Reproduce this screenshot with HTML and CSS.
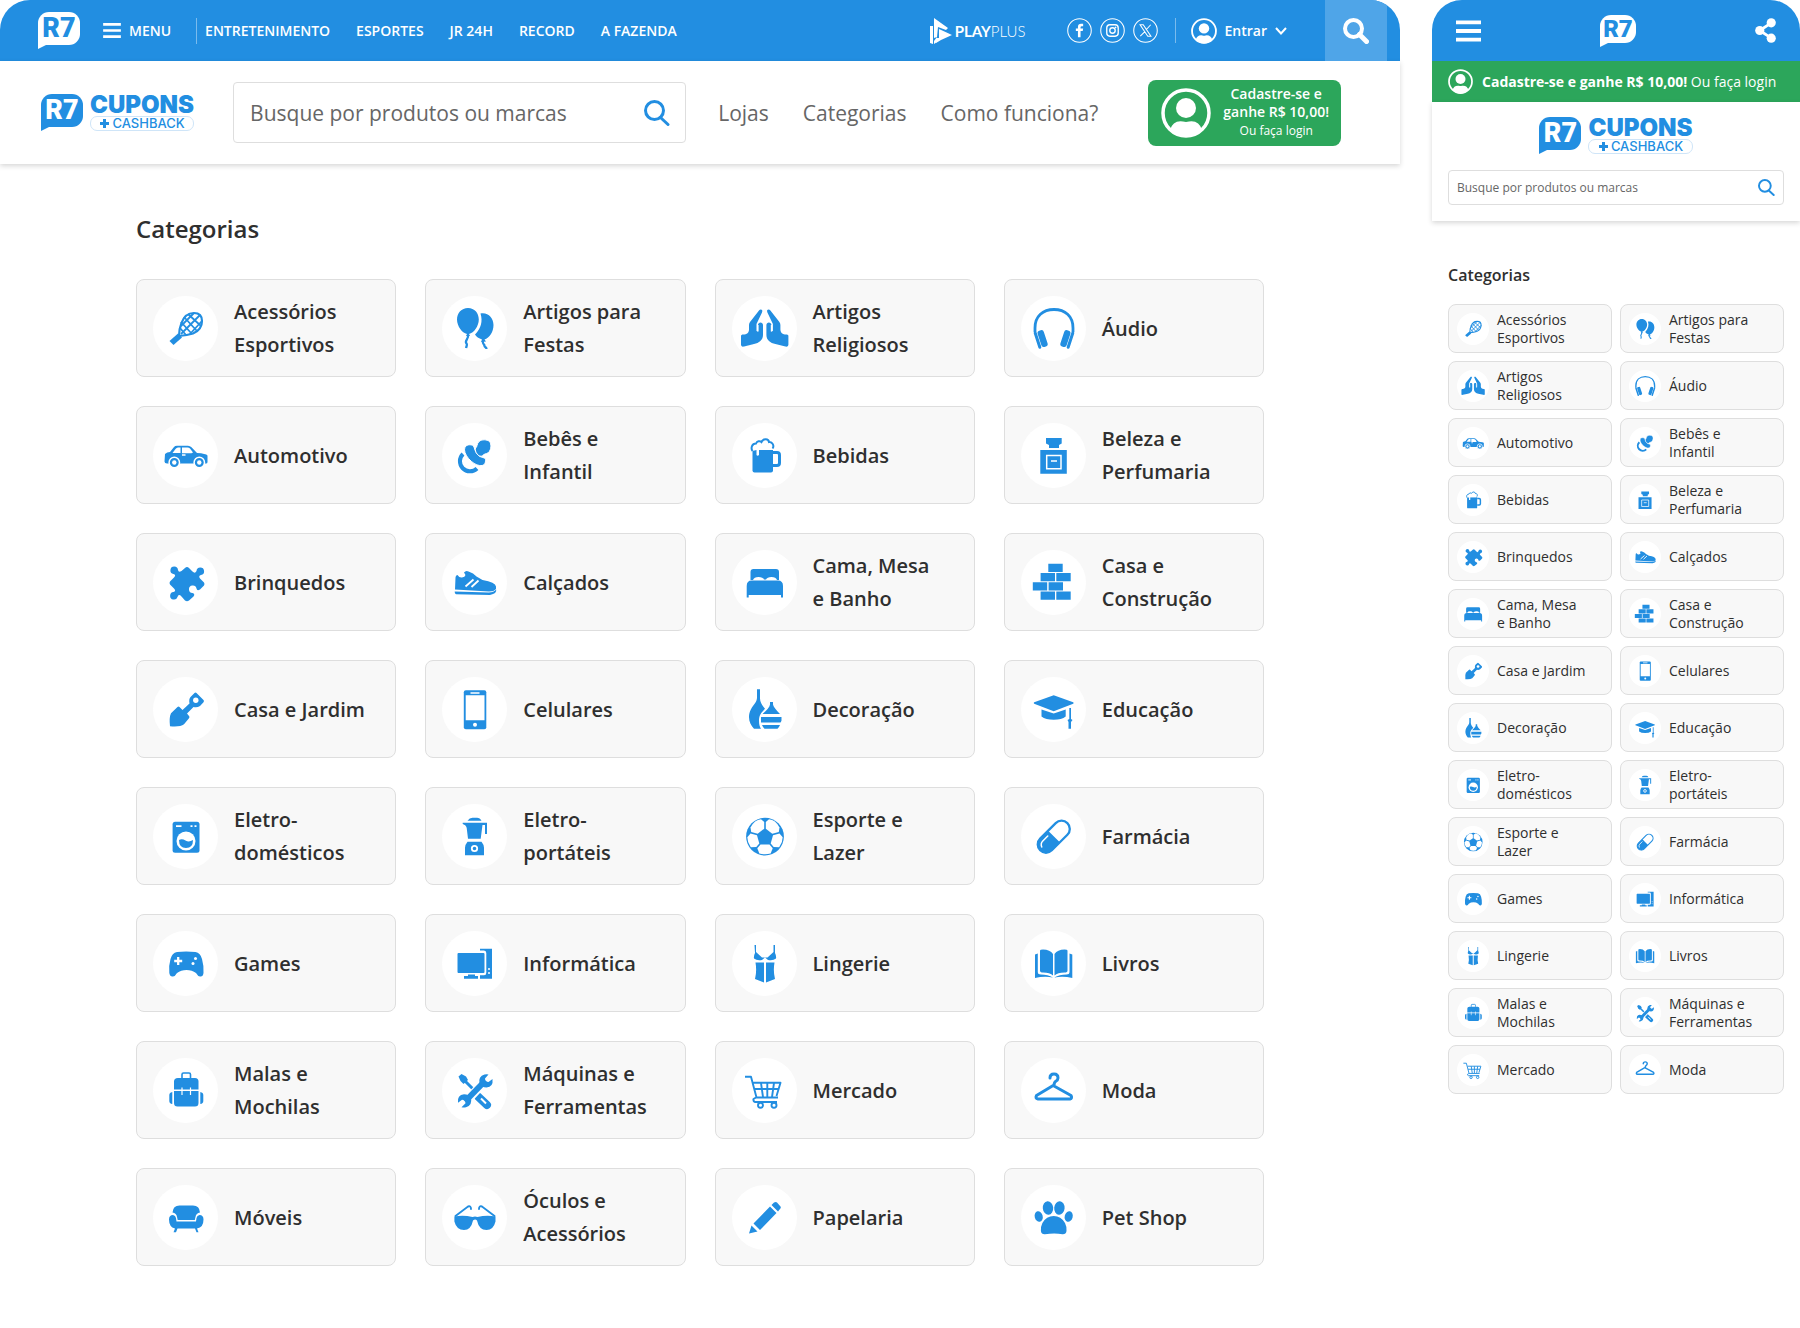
FILE: index.html
```
<!DOCTYPE html>
<html lang="pt-BR">
  <head>
    <meta charset="UTF-8" />
    <meta name="viewport" content="width=device-width, initial-scale=1.0" />
    <title>R7 Cupons - Categorias</title>
    <link rel="stylesheet" href="styles.css">
  </head>
  <body>
    <svg class="sprite" aria-hidden="true">
      <symbol id="playplus" viewBox="0 0 22 26">
        <path d="M0 8h3v18l-3-1zM4 0l14 10-2 2-8-3-1 10-3 1z" />
        <path d="M9 11l13 6-11 5-5 3 1-5h2z" />
        <path d="M4 23l3-4v5l-3 2z" />
      </symbol>

      <!-- interface -->
      <symbol id="bars" viewBox="0 0 26 22">
        <path d="M0 0h26v4H0zM0 9h26v4H0zM0 18h26v4H0z" />
      </symbol>
      <symbol id="search" viewBox="0 0 26 26">
        <g fill="none" stroke="currentColor" stroke-width="3"><circle cx="10.500" cy="10.500" r="9" /><path d="M16.500 17.500l7.500 7" stroke-linecap="round" /></g>
      </symbol>
      <symbol id="search-bold" viewBox="0 0 26 26">
        <g fill="none" stroke="currentColor" stroke-width="4"><circle cx="10.500" cy="10.500" r="8.500" /><path d="M16.500 16.500l7 7" stroke-width="5" stroke-linecap="round" /></g>
      </symbol>
      <symbol id="user" viewBox="0 0 50 50">
        <circle cx="25" cy="25" r="23" fill="none" stroke="currentColor" stroke-width="3.500" />
        <circle cx="25" cy="20" r="10" />
        <path d="M9 42q3-10 13-8.500 3 .8 6 0 10-1.500 13 8.500-7 7-16 7T9 42z" />
      </symbol>
      <symbol id="chevron" viewBox="0 0 12 8">
        <path d="M1 1l5 5.500L11 1" fill="none" stroke="currentColor" stroke-width="2" />
      </symbol>
      <symbol id="share" viewBox="0 0 22 26">
        <path d="M17 5L5 13l12 8" fill="none" stroke="currentColor" stroke-width="3" />
        <circle cx="17" cy="5" r="4.800" /><circle cx="5" cy="13" r="4.800" /><circle cx="17" cy="21" r="4.800" />
      </symbol>
      <symbol id="facebook" viewBox="0 0 24 24">
        <circle cx="12" cy="12" r="11.300" fill="none" stroke="currentColor" />
        <path d="M10.500 18.500v-6H8.500V10h2V8.500q0-3 3-3h2V8h-1.300q-1.200 0-1.200 1.200V10h2.500l-.4 2.500H13v6z" />
      </symbol>
      <symbol id="instagram" viewBox="0 0 24 24">
        <g fill="none" stroke="currentColor"><circle cx="12" cy="12" r="11.300" /><rect x="6.500" y="6.500" width="11" height="11" rx="3" stroke-width="1.300" /><circle cx="12" cy="12" r="2.600" stroke-width="1.300" /></g>
        <circle cx="15" cy="9" r=".8" />
      </symbol>
      <symbol id="x" viewBox="0 0 24 24">
        <g fill="none" stroke="currentColor"><circle cx="12" cy="12" r="11.300" /><path d="M6.800 6.500h3l7.400 11h-3zM17 6.500l-4.600 5M11.400 13L7 17.500" /></g>
      </symbol>

      <!-- categories -->
      <symbol id="racket" viewBox="0 0 65 65">
        <g fill="none" stroke="currentColor" stroke-width="1.800">
          <path d="M26 40c0-4 .5-8 2.500-13C31 20 35 17 41 17c5 0 8 3 8 8 0 6-3 10-9 12.500-5 1.500-9 2-14 2.500z" stroke-width="2.200" />
          <path d="M31 21l13 14M28 26l11 12M27 32l6 7M35 18l13 12M47 19L28 38M41 17L28 30M49 25L37 38" />
        </g>
        <path d="M25 37.500l4 4-8.500 7.500-4-4z" />
      </symbol>
      <symbol id="balloons" viewBox="0 0 65 65">
        <path d="M26 12c6.500 0 10.800 5 10.800 11.500C36.800 30 32 37 27 38l1 2h-4l1-2c-5-1-10-8-10-14.500C15 17 19.500 12 26 12z" />
        <path d="M38.500 17.500C46 16 51.500 22 51.500 29c0 7-4 13-9 14.500l1.500 2-5 .5 1-2.500c-3-1-6-3-7-5 6-6 8-13 5.500-21z" />
        <path d="M26 39c1 4-4 6-1.500 8.500 1 1 0 3-.5 4.500M41 45c-1 4 2 3 1.500 5 0 1 2 1 2 3" fill="none" stroke="currentColor" stroke-width="2.300" />
      </symbol>
      <symbol id="hands" viewBox="0 0 65 65">
        <g id="hand">
          <path d="M27 14.500c1-1.500 4.500-1.500 3 2L24.500 28v7l1.500.5V29c0-3.500 5-3.500 5 0v10c0 5-4 8-9 9l-10 2.500c-2 .5-3-.5-3-2V40c0-1 1-1.500 2-1.500 4 0 6-2 6-5V29q0-1.500 1-3z" />
          <path d="M26 29v6.500" fill="none" stroke="#fff" stroke-width="1.200" />
        </g>
        <use href="#hand" transform="translate(65.400 0) scale(-1 1)" />
      </symbol>
      <symbol id="headphones" viewBox="0 0 65 65">
        <path d="M14 36v-4C14 20 22 13.500 33 13.500S52 20 52 32v4" fill="none" stroke="currentColor" stroke-width="2.800" />
        <rect x="18.500" y="34" width="6.500" height="17" rx="2.500" transform="rotate(-18 22 43)" />
        <rect x="15" y="35" width="3" height="18" rx="1.500" transform="rotate(-18 17 44)" />
        <rect x="41" y="34" width="6.500" height="17" rx="2.500" transform="rotate(18 44 43)" />
        <rect x="48" y="35" width="3" height="18" rx="1.500" transform="rotate(18 49 44)" />
      </symbol>
      <symbol id="car" viewBox="0 0 65 65">
        <path d="M12 31q2-2 5-2l4-5q1-1.300 3-1.300h11q2 0 3.500 1.500L44 30q9 .5 10.500 2.500V39q0 1.500-1.500 1.500H14q-2.500 0-2.500-2z" />
        <path d="M27.500 24.500H25q-1.500 0-2.500 1.500l-3 4h8zM29 24.500h5.500q1.500 0 2.500 1l3 4-1.500.8H29z" fill="#fff" />
        <g stroke="#fff" stroke-width="1.500"><circle cx="21.300" cy="39.500" r="5.200" /><circle cx="46.300" cy="39.500" r="5.200" /></g>
        <circle cx="21.300" cy="39.500" r="2.200" fill="#fff" /><circle cx="46.300" cy="39.500" r="2.200" fill="#fff" />
        <path d="M29 32h3.500" stroke="#fff" stroke-width="1.300" />
      </symbol>
      <symbol id="pacifier" viewBox="0 0 65 65">
        <path d="M21 31a10 10 0 1 0 14 14.500" fill="none" stroke="currentColor" stroke-width="4" />
        <path d="M23 24c2-3 8-3 9 0 1 4 3 8 6 9.500s6 1 5.500 4c0 4-2 5.500-6 5C31 42 20 31 23 24z" stroke="#fff" stroke-width="1" />
        <path d="M33.500 25c2-1 1-4 3.500-6.500 3-2.500 8-2 10.500 0 2 2.500 2 8-1 11-2.500 2-5 1-6 3.500-4 1.500-8-4-7-8z" stroke="#fff" stroke-width="1" />
      </symbol>
      <symbol id="beer" viewBox="0 0 65 65">
        <path d="M20.500 27H41v20.500q0 2-2 2H22.500q-2 0-2-2z" />
        <path d="M41 29.500h4q2.500 0 2.500 2.500v8q0 2.500-2.500 2.500h-4" fill="none" stroke="currentColor" stroke-width="3" />
        <path d="M20.500 28c-2-3-.5-7.500 3.500-7.500 1-2.500 4-3 5.500-1.500 2-4 7-3.500 7.500 0 3.500-.5 5.500 4 3.500 6.500l-1.500 1.500H27v5q-1.500 1.500-2.500 0v-5z" fill="#fff" />
        <path d="M20.500 28c-2-3-.5-7.500 3.500-7.500 1-2.500 4-3 5.500-1.500 2-4 7-3.500 7.500 0 3.500-.5 5.500 4 3.500 6.500" fill="none" stroke="currentColor" stroke-width="2" />
      </symbol>
      <symbol id="perfume" viewBox="0 0 65 65">
        <path d="M25 15h15.700v5.500L38 22v3H28v-3l-3-1.500zM19.300 27h26.500v23.700H19.300z" />
        <path d="M25.700 32.500H40v13.200H25.700z" fill="none" stroke="#fff" stroke-width="1.500" />
        <path d="M30 38h6" stroke="#fff" stroke-width="1.500" />
      </symbol>
      <symbol id="puzzle" viewBox="0 0 65 65">
        <path d="M32 18q2-2 4 0l3.500 3.500q2.500 2.500 4-.5a3.800 3.800 0 1 1 4.500 4q-3 1-1 3.500l4 4q1 1.500 0 3l-4 4q-3 2-3.500-1a3.800 3.800 0 1 0-4 4.500q3 1 1 3.500l-4.500 4q-2 1.500-4 0l-3.500-4q-3-3-4 .5a3.800 3.800 0 1 1-4-5q3-1 .5-3.500l-4-4q-1-1.500 0-3l4-4q2.500-2.500-.5-3.500a3.800 3.800 0 1 1 4.500-4q.5 3 3.500 1z" />
      </symbol>
      <symbol id="shoe" viewBox="0 0 65 65">
        <path d="M13.500 27.500q0-2.500 2-2.500 2 3 4.500 2.500 3-.5 3.500-2.500l-1.500-2.500q2-2.500 4.500-1l4.500 2 3.500 3 6 3.500q13 2 13.500 6.500v2.500q-2 2.500-7 2.500L13 39.500z" />
        <path d="M12.700 41.500l34 1q5 0 7.500-3 .8 4-6.200 5.500l-34-.8q-1.500-.5-1.300-2.700z" />
        <path d="M23.500 36.500l8-7M29.500 37l7-6.500" stroke="#fff" stroke-width="1.800" />
      </symbol>
      <symbol id="bed" viewBox="0 0 65 65">
        <path d="M18.500 30v-8q0-3 3-3h22.500q3 0 3 3v8h-2q-1-3-5.500-3T34 29.500h-2Q31 27 26.500 27T21 30z" />
        <path d="M14.700 47.500V36q0-5.500 5-5.500H46q5 0 5 5.500v11.500h-2V45H16.700v2.500z" />
      </symbol>
      <symbol id="bricks" viewBox="0 0 65 65">
        <path d="M27.300 13.700h14.400V22H27.300zM19.600 23H34v8.300H19.600zM35.300 23h14.400v8.300H35.300zM11.800 32.300h14.400v8.300H11.800zM27.600 32.300H42v8.300H27.600zM19.600 41.500H34v8.300H19.600zM35.300 41.500h14.400v8.300H35.300z" />
      </symbol>
      <symbol id="trowel" viewBox="0 0 65 65">
        <path d="M24.500 30q1-.8 2 0l3 3 7-6.500q-1-5 1.500-7l3.500-3.500q1-.8 2 0l7 7q1 1 0 2.200l-3.500 3.800q-3 2-6.500 1L34 36.500l2 2.500q1 1 0 2.200l-5 6q-4 3-14 2-1-9 1-13z" />
        <circle cx="42.800" cy="23.300" r="2.700" fill="#fff" />
      </symbol>
      <symbol id="phone" viewBox="0 0 65 65">
        <rect x="21.800" y="13.300" width="22.500" height="39" rx="2" />
        <path d="M23.700 18.300h18.800v25H23.700zM28.500 15.300h9v1.500h-9z" fill="#fff" />
        <circle cx="33" cy="47.800" r="2" fill="#fff" />
      </symbol>
      <symbol id="vases" viewBox="0 0 65 65">
        <path d="M25 12.300h3v9c0 4 2 7 5 10.500-3 4-6 5-6 12 0 4 .8 6 2 8h-7c-3-3-5-7-5-11.500 0-6 3-10 6-14 1.500-2 2-4 2-6z" />
        <path d="M38 25h3v2.500q.5 3 7 9.500H30.500q7-6 7.500-9.500zM29 40h20.500v3.500q-.5 1.500-1 2H29zM30 48h18q-1 2.500-2.500 3.800h-13Q31 50.500 30 48z" />
      </symbol>
      <symbol id="cap" viewBox="0 0 65 65">
        <path d="M32.700 18.300l19.500 6.900q1 .8 0 1.600l-19.500 7.500-19.500-7.500q-1-.8 0-1.600z" />
        <path d="M20.500 32.500l12.200 4 12-4v7q-4 3.200-12 3.200t-12.200-3.200z" />
        <path d="M48.300 31h1.700v11l1.500 1-1.500 2v6.700h-2.500V45L46.500 43l1.800-1z" />
      </symbol>
      <symbol id="washer" viewBox="0 0 65 65">
        <rect x="19.600" y="17.700" width="26.900" height="31" rx="2.500" />
        <circle cx="33" cy="37" r="9.500" fill="#fff" />
        <path d="M26 36q3-1.500 6.500.5T40 36q0 8-7 8t-7-8z" />
        <path d="M23 22.200h5.500M37.500 22.200h2M41.500 22.200h2" stroke="#fff" stroke-width="1.800" />
      </symbol>
      <symbol id="blender" viewBox="0 0 65 65">
        <path d="M25.500 16.700q2-3 5-3H35q3 0 4.500 3zM20.700 18.700H45V30h-2V21h-2.500l-1.800 13.700H26L24.700 24q-.5-3-4-4zM25.500 37.700h14q2.500 3 2.500 6v7.600H23v-7.600q0-3 2.500-6z" />
        <circle cx="32.500" cy="44.500" r="2.700" fill="none" stroke="#fff" stroke-width="1.800" />
      </symbol>
      <symbol id="ball" viewBox="0 0 65 65">
        <circle cx="33" cy="32.600" r="18.900" />
        <g fill="#fff">
          <path d="M32.200 18v6.700l-6.500 5-6.500-1.700-.7-4.500Q22.500 15.500 29 15.200z" />
          <path d="M33.800 18v6.700l6.500 5 6.500-1.700.7-4.500Q43.500 15.500 37 15.200z" />
          <path d="M18.500 29.500l6.500 1.800 2.300 8.200-3 3.500-5.500.3q-3.500-5-3.500-10z" />
          <path d="M47.500 29.500L41 31.300l-2.300 8.200 3 3.500 5.500.3q3.500-5 3.500-10z" />
          <path d="M28.500 40.500h9l3.200 3.800-2 5.200q-5.700 1.500-11.400 0l-2-5.200z" />
        </g>
      </symbol>
      <symbol id="pill" viewBox="0 0 65 65">
        <g transform="rotate(-45 32.700 32.700)">
          <rect x="13.500" y="24.500" width="38.500" height="16.500" rx="8.250" fill="none" stroke="currentColor" stroke-width="2.300" />
          <path d="M33 24.500V41H22a8 8 0 0 1 0-16.500z" />
          <path d="M17 31.500q1.500-3.500 5-3.500h7" fill="none" stroke="#fff" stroke-width="1.500" stroke-linecap="round" />
        </g>
      </symbol>
      <symbol id="gamepad" viewBox="0 0 65 65">
        <path d="M24 21q9-1 18.500 0 5 1 6.500 7 2 7 1.500 14-.5 4-3.500 3.500-2 0-4-3.500-4-3-9.500-3T24 42q-2 3.500-4 3.500-3 .5-3.700-3.500Q15.500 35 17.500 28q1.500-6 6.500-7z" />
        <path d="M25.200 26v8M21.200 30h8" stroke="#fff" stroke-width="2.300" />
        <circle cx="42.500" cy="27.500" r="1.500" fill="#fff" /><circle cx="40" cy="32.500" r="1.500" fill="#fff" />
      </symbol>
      <symbol id="computer" viewBox="0 0 65 65">
        <path d="M16.500 22h25q1 0 1 1v18q0 1-1 1h-25q-1 0-1-1V23q0-1 1-1zM26 43.500h7v1.500h3v2.700H22V45h4zM38 17.700h12v30H38v-3.500h4q2.300 0 2.300-2.500V22q0-2.500-2.300-2.500h-4z" />
        <circle cx="47" cy="38" r="1" fill="#fff" /><circle cx="47" cy="42" r="1" fill="#fff" />
      </symbol>
      <symbol id="lingerie" viewBox="0 0 65 65">
        <path d="M22.500 14H24v7l6 5.500h5.500l6-5.500v-7H43v8q1.500 3 1 5.500-3 2.500-8 1.500l-3-2.500-3 2.500q-5 1-8-1.500-.5-2.500 1-5.500z" />
        <path d="M23.500 31.500h8.500v20l-9-3.500q2-8 .5-16.500zM42.500 31.500H34v20l9-3.500q-2-8-.5-16.500z" />
      </symbol>
      <symbol id="book" viewBox="0 0 65 65">
        <path d="M32 23q-3-4.500-10-4.500-3 0-3 1v20q0 2 3 2 7 0 10 3zM33.500 23q3-4.500 10-4.500 3 0 3 1v20q0 2-3 2-7 0-10 3z" />
        <path d="M14 23.500l2.800-1V41q0 2.500 3 2.500 7 0 12.200 3Q23 45 14 47zM51.300 23.500l-2.800-1V41q0 2.500-3 2.500-7 0-12.200 3Q42.300 45 51.300 47z" />
      </symbol>
      <symbol id="backpack" viewBox="0 0 65 65">
        <path d="M29 20v-3.500q0-1.500 1.500-1.500H36q1.500 0 1.500 1.500V20" fill="none" stroke="currentColor" stroke-width="1.600" />
        <path d="M25 20h17q3.500 0 3.500 3.500v8h-24.500v-8q0-3.500 4-3.500zM21 33h24.500v12q0 3.500-3.500 3.500H24.500q-3.500 0-3.500-3.500zM19.300 34v12q-3-.5-3-3v-6q0-2.500 3-3zM47.300 34v12q3-.5 3-3v-6q0-2.500-3-3z" />
        <path d="M29 29.500V37M37.500 29.500V37" stroke="#fff" stroke-width="1.200" />
      </symbol>
      <symbol id="tools" viewBox="0 0 65 65">
        <path d="M19 19l13 13" stroke="currentColor" stroke-width="3" />
        <path d="M16.500 18.500l3-2.500 4.500 2.500 2 3.500-4.500 4-3-3z" />
        <path d="M36 38.500l9 8.500" stroke="currentColor" stroke-width="8" stroke-linecap="round" />
        <path d="M39 40.500l5 5" stroke="#fff" stroke-width="2" />
        <path d="M24 43.500L44 22" stroke="#fff" stroke-width="9" />
        <path d="M23 43.500L43.500 22.500" stroke="currentColor" stroke-width="6" />
        <path d="M46.500 16.500l-3.500 4 .5 3 3 .5 4-3q1 8-6 8.500-5 0-7-4-1.500-7 5-9 2-.5 4 0zM19.500 49.300l4-4-.5-3-3-.5-4 3q-1-8 6-8.500 5 0 7 4 1.500 7-5 9-2 .5-4.500 0z" />
      </symbol>
      <symbol id="cart" viewBox="0 0 65 65">
        <g fill="none" stroke="currentColor" stroke-width="1.900" stroke-linejoin="round">
          <path d="M13 18.700h6l5.500 20.800H46M21.500 24.800h27L44.500 38M22.500 31h24M45 44H23q-2-.5-1.500-3l2.500-1.500M29 25l2 14M35.300 25v14M42 25l-2 14" />
          <circle cx="28.500" cy="47.300" r="2.500" /><circle cx="42" cy="47.300" r="2.500" />
        </g>
      </symbol>
      <symbol id="hanger" viewBox="0 0 65 65">
        <path d="M29 20q0-4 4-4t4 4q0 2-2.500 3.500Q33 24.500 33 28L50 37.500q1.500 3-1 3.500H17q-3-.5-1.500-3.500L33 27" fill="none" stroke="currentColor" stroke-width="3" stroke-linecap="round" stroke-linejoin="round" />
      </symbol>
      <symbol id="armchair" viewBox="0 0 65 65">
        <path d="M19.500 27.500q.5-7 7-7h13.500q6.500 0 7 7-4 .5-4.500 4.500l-.7 3H24.700L24 32q-.5-4-4.500-4.500z" />
        <path d="M20 30q2.500.5 3 3l.5 3.500h19.500l.5-3.500q.5-2.500 3-3 4 0 4 4.500 0 8-6.500 9l1.500 3.700h-2l-1.500-3.700h-17.500l-1.500 3.700h-2.500l1.500-3.700q-6-1.500-6-9 0-4.500 4-4.500z" />
      </symbol>
      <symbol id="glasses" viewBox="0 0 65 65">
        <path d="M12.400 31.500q9-1.500 18.100.5 2.500-.8 5 0 9-2 18-.5v5q-2 8.500-9 8.500-7.500 0-9.500-9.500-1.800-2-4 0-2 9.500-9 9.500-7.500 0-9.600-8.500z" />
        <path d="M13.500 31L26 21.500q3-1 3 2.500M52.500 31L40 21.500q-3-1-3 2.500" fill="none" stroke="currentColor" stroke-width="1.900" stroke-linecap="round" />
      </symbol>
      <symbol id="pencil" viewBox="0 0 65 65">
        <path d="M42 17.500q2-1 3 0l3.500 4q.8 1.500-.5 2.500L46 26.500 39.500 20zM38 21.500l6.500 6.500-16.500 17-6.500-6.500zM19.500 40.500l6 6-8.500 2z" />
      </symbol>
      <symbol id="paw" viewBox="0 0 65 65">
        <ellipse cx="27" cy="23" rx="5.200" ry="6.800" transform="rotate(-5 27 23)" />
        <ellipse cx="38.400" cy="23" rx="5.200" ry="6.800" transform="rotate(5 38.400 23)" />
        <ellipse cx="17.700" cy="31.500" rx="4" ry="5.300" transform="rotate(-14 17.700 31.500)" />
        <ellipse cx="47.700" cy="31.500" rx="4" ry="5.300" transform="rotate(14 47.700 31.500)" />
        <path d="M32.700 31Q40 31 44 38q2 4 1.500 8-.5 3.500-4 3.300-8-1.500-17.600 0-3.500.2-4-3.300-.5-4 1.500-8 4-7 11.300-7z" />
      </symbol>
    </svg>

    <!-- desktop -->
    <div class="desktop">
      <div class="topbar">
        <a href="#" class="r7">R7</a>
        <button class="menu-btn"><svg><use href="#bars" /></svg>MENU</button>
        <nav class="topbar-nav">
          <a href="#">ENTRETENIMENTO</a>
          <a href="#">ESPORTES</a>
          <a href="#">JR 24H</a>
          <a href="#">RECORD</a>
          <a href="#">A FAZENDA</a>
        </nav>
        <a href="#" class="playplus"><svg><use href="#playplus" /></svg><span><b>PLAY</b>PLUS</span></a>
        <div class="social">
          <a href="#" aria-label="Facebook"><svg><use href="#facebook" /></svg></a>
          <a href="#" aria-label="Instagram"><svg><use href="#instagram" /></svg></a>
          <a href="#" aria-label="X"><svg><use href="#x" /></svg></a>
        </div>
        <button class="login-btn">
          <svg class="login-user"><use href="#user" /></svg>Entrar<svg class="login-arrow"><use href="#chevron" /></svg>
        </button>
        <button class="topbar-search" aria-label="Buscar"><svg><use href="#search-bold" /></svg></button>
      </div>

      <header class="header">
        <a href="#" class="logo">
          <span class="r7">R7</span>
          <span class="logo-name">
            <span class="logo-cupons">CUPONS</span>
            <span class="logo-cashback"><svg><path d="M4 1h3v3h3v3H7v3H4V7H1V4h3z" /></svg>CASHBACK</span>
          </span>
        </a>
        <form class="search">
          <input type="search" placeholder="Busque por produtos ou marcas" aria-label="Busque por produtos ou marcas">
          <button type="button" aria-label="Buscar"><svg><use href="#search" /></svg></button>
        </form>
        <nav class="header-nav">
          <a href="#">Lojas</a>
          <a href="#">Categorias</a>
          <a href="#">Como funciona?</a>
        </nav>
        <a href="#" class="signup">
          <svg><use href="#user" /></svg>
          <span class="signup-text"><b>Cadastre-se e<br>ganhe R$ 10,00!</b><small>Ou faça login</small></span>
        </a>
      </header>

      <main class="content">
        <h1>Categorias</h1>
        <div class="grid" id="grid-desktop"></div>
      </main>
    </div>

    <!-- mobile -->
    <div class="mobile">
      <div class="topbar">
        <button class="mobile-menu" aria-label="Menu"><svg><use href="#bars" /></svg></button>
        <a href="#" class="r7">R7</a>
        <button class="mobile-share" aria-label="Compartilhar"><svg><use href="#share" /></svg></button>
      </div>
      <a href="#" class="signup-bar">
        <svg><use href="#user" /></svg>
        <span><b>Cadastre-se e ganhe R$ 10,00!</b> Ou faça login</span>
      </a>
      <header class="header">
        <a href="#" class="logo">
          <span class="r7">R7</span>
          <span class="logo-name">
            <span class="logo-cupons">CUPONS</span>
            <span class="logo-cashback"><svg><path d="M4 1h3v3h3v3H7v3H4V7H1V4h3z" /></svg>CASHBACK</span>
          </span>
        </a>
        <form class="search">
          <input type="search" placeholder="Busque por produtos ou marcas" aria-label="Busque por produtos ou marcas">
          <button type="button" aria-label="Buscar"><svg><use href="#search" /></svg></button>
        </form>
      </header>
      <main class="content">
        <h2>Categorias</h2>
        <div class="grid" id="grid-mobile"></div>
      </main>
    </div>

    <script src="script.js"></script>
  </body>
</html>
```

FILE: styles.css
```
* {
  box-sizing: border-box;
}

body {
  margin: 0;
  display: flex;
  gap: 32px;
  align-items: flex-start;
  background-color: #fff;
  color: #2f2f2f;
  font-family: "Open Sans", "Noto Sans", sans-serif;
}

a {
  color: inherit;
  text-decoration: none;
}

button {
  display: flex;
  align-items: center;
  padding: 0;
  border: none;
  background: none;
  color: inherit;
  font: inherit;
  cursor: pointer;
}

svg {
  display: block;
  flex-shrink: 0;
  fill: currentColor;
}

.sprite {
  position: absolute;
  width: 0;
  height: 0;
}

.desktop {
  flex: 1;
  min-width: 0;
}

.mobile {
  width: 368px;
}

/* top bar */

.topbar {
  display: flex;
  align-items: center;
  height: 61px;
  padding-left: 38px;
  border-radius: 30px 30px 0 0;
  background-color: #228ee1;
  color: #fff;
  font-size: 14px;
  font-weight: 600;
  overflow: hidden;
}

/* R7 speech bubble */
.r7 {
  position: relative;
  width: 42px;
  margin-bottom: 4px;
  border-radius: 11px 11px 11px 0;
  background-color: #fff;
  color: #228ee1;
  font-family: Roboto, sans-serif;
  font-size: 27px;
  font-weight: 900;
  line-height: 33px;
  text-align: center;
}

.r7::after {
  content: "";
  position: absolute;
  top: 100%;
  left: 0;
  border-top: 4px solid #fff;
  border-right: 8px solid transparent;
}

.logo .r7 {
  background-color: #228ee1;
  color: #fff;
}

.logo .r7::after {
  border-top-color: #228ee1;
}

.menu-btn {
  gap: 8px;
  margin-left: 23px;
}

.menu-btn svg {
  width: 18px;
  height: 15px;
}

.topbar-nav {
  display: flex;
  gap: 26px;
  margin-left: 25px;
  padding-left: 8px;
  border-left: 1px solid #7abbed;
  line-height: 26px;
}

.playplus {
  display: flex;
  align-items: center;
  gap: 3px;
  margin-left: auto;
  font-family: Lato, sans-serif;
  font-size: 15px;
  font-weight: 300;
}

.playplus b {
  font-weight: 700;
}

.playplus svg {
  width: 22px;
  height: 26px;
}

.social {
  display: flex;
  gap: 8px;
  margin-left: 41px;
  padding-right: 17px;
  border-right: 1px solid #7abbed;
}

.social svg {
  width: 25px;
  height: 25px;
}

.login-btn {
  gap: 8px;
  margin-left: 15px;
}

.login-user {
  width: 26px;
  height: 26px;
}

.login-arrow {
  width: 12px;
  height: 8px;
}

.topbar-search {
  justify-content: center;
  width: 62px;
  height: 61px;
  margin-left: 38px;
  margin-right: 13px;
  background-color: #4fa5e8;
}

.topbar-search svg {
  width: 26px;
  height: 26px;
}

/* header */

.header {
  display: flex;
  align-items: center;
  height: 103px;
  padding: 0 59px 0 41px;
  box-shadow: 0 2px 5px rgba(0, 0, 0, 0.16);
}

.logo {
  display: flex;
  align-items: center;
  gap: 7px;
  color: #228ee1;
}

.logo-name {
  display: flex;
  flex-direction: column;
  font-family: Inter, sans-serif;
}

.logo-cupons {
  font-size: 24px;
  font-weight: 900;
  line-height: 22px;
}

.logo-cashback {
  display: flex;
  align-items: center;
  justify-content: center;
  gap: 2px;
  border: 1px solid #cfe5f8;
  border-radius: 7px;
  font-size: 13px;
  font-weight: 500;
  line-height: 13px;
}

.logo-cashback svg {
  width: 11px;
  height: 11px;
}

.search {
  display: flex;
  align-items: center;
  height: 61px;
  padding: 0 15px 0 16px;
  border: 1px solid #dedede;
  border-radius: 4px;
  color: #228ee1;
}

.desktop .search {
  flex: 1;
  margin-left: 39px;
}

.search input {
  flex: 1;
  min-width: 0;
  padding: 0;
  border: none;
  outline: none;
  background: none;
  font-family: inherit;
  font-size: 21px;
}

.search input::placeholder {
  color: #666;
  opacity: 1;
}

.search svg {
  width: 26px;
  height: 26px;
}

.header-nav {
  display: flex;
  gap: 34px;
  margin: 0 50px 0 32px;
  color: #666;
  font-size: 21px;
}

.signup {
  display: flex;
  align-items: center;
  gap: 12px;
  height: 66px;
  padding: 0 12px 0 13px;
  border-radius: 8px;
  background-color: #2ca65b;
  color: #fff;
}

.signup svg {
  width: 50px;
  height: 50px;
}

.signup-text {
  display: flex;
  flex-direction: column;
  text-align: center;
  font-size: 14px;
  line-height: 18px;
}

.signup b {
  font-weight: 600;
}

.signup small {
  font-size: 12px;
  line-height: 20px;
}

/* categories */

.content {
  padding: 49px 136px;
}

.content h1 {
  margin: 0 0 34px;
  font-size: 24px;
  font-weight: 600;
  line-height: 32px;
}

.grid {
  display: grid;
  grid-template-columns: repeat(4, 1fr);
  gap: 29px;
}

.card {
  display: flex;
  align-items: center;
  gap: 16px;
  height: 98px;
  padding: 0 16px;
  border: 1px solid #dedede;
  border-radius: 8px;
  background-color: #f8f8f8;
  font-size: 20px;
  font-weight: 600;
  line-height: 33px;
}

.card svg {
  width: 65px;
  height: 65px;
  border-radius: 50%;
  background-color: #fff;
  color: #228ee1;
}

/* mobile */

.mobile .topbar {
  justify-content: space-between;
  padding: 0 24px;
}

.mobile .topbar .r7 {
  width: 36px;
  font-size: 24px;
  line-height: 28px;
}

.mobile-menu svg {
  width: 25px;
  height: 22px;
}

.mobile-share svg {
  width: 21px;
  height: 25px;
}

.signup-bar {
  display: flex;
  align-items: center;
  gap: 9px;
  height: 41px;
  padding-left: 16px;
  background-color: #2ca65b;
  color: #fff;
  font-size: 14px;
  white-space: nowrap;
}

.signup-bar svg {
  width: 25px;
  height: 25px;
}

.mobile .header {
  flex-direction: column;
  height: 119px;
  padding: 15px 16px 0;
}

.mobile .search {
  width: 100%;
  height: 35px;
  margin-top: 16px;
  padding: 0 8px;
}

.mobile .search input {
  font-size: 12px;
}

.mobile .search svg {
  width: 17px;
  height: 17px;
}

.mobile .content {
  padding: 42px 16px;
}

.mobile .content h2 {
  margin: 0 0 17px;
  font-size: 16px;
  font-weight: 600;
  line-height: 24px;
}

.mobile .grid {
  grid-template-columns: repeat(2, 1fr);
  gap: 8px;
}

.mobile .card {
  gap: 8px;
  height: 49px;
  padding: 0 8px;
  font-size: 14px;
  font-weight: 400;
  line-height: 18px;
}

.mobile .card svg {
  width: 32px;
  height: 32px;
}
```

FILE: script.js
```
const categories = [
  { icon: "racket", name: "Acessórios<br>Esportivos" },
  { icon: "balloons", name: "Artigos para<br>Festas" },
  { icon: "hands", name: "Artigos<br>Religiosos" },
  { icon: "headphones", name: "Áudio" },
  { icon: "car", name: "Automotivo" },
  { icon: "pacifier", name: "Bebês e<br>Infantil" },
  { icon: "beer", name: "Bebidas" },
  { icon: "perfume", name: "Beleza e<br>Perfumaria" },
  { icon: "puzzle", name: "Brinquedos" },
  { icon: "shoe", name: "Calçados" },
  { icon: "bed", name: "Cama, Mesa<br>e Banho" },
  { icon: "bricks", name: "Casa e<br>Construção" },
  { icon: "trowel", name: "Casa e Jardim" },
  { icon: "phone", name: "Celulares" },
  { icon: "vases", name: "Decoração" },
  { icon: "cap", name: "Educação" },
  { icon: "washer", name: "Eletro-<br>domésticos" },
  { icon: "blender", name: "Eletro-<br>portáteis" },
  { icon: "ball", name: "Esporte e<br>Lazer" },
  { icon: "pill", name: "Farmácia" },
  { icon: "gamepad", name: "Games" },
  { icon: "computer", name: "Informática" },
  { icon: "lingerie", name: "Lingerie" },
  { icon: "book", name: "Livros" },
  { icon: "backpack", name: "Malas e<br>Mochilas" },
  { icon: "tools", name: "Máquinas e<br>Ferramentas" },
  { icon: "cart", name: "Mercado" },
  { icon: "hanger", name: "Moda" },
  { icon: "armchair", name: "Móveis" },
  { icon: "glasses", name: "Óculos e<br>Acessórios" },
  { icon: "pencil", name: "Papelaria" },
  { icon: "paw", name: "Pet Shop" },
];

function renderGrid(id, items) {
  document.getElementById(id).innerHTML = items
    .map(
      (item) => `
        <a href="#" class="card">
          <svg aria-hidden="true"><use href="#${item.icon}" /></svg>
          <span>${item.name}</span>
        </a>`
    )
    .join("");
}

renderGrid("grid-desktop", categories);
renderGrid("grid-mobile", categories.slice(0, 28));
```
